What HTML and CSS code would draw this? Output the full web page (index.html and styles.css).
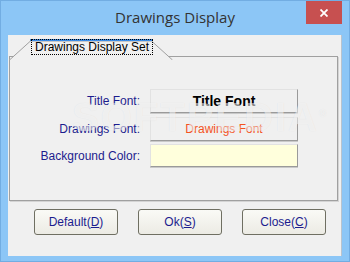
FILE: index.html
```html
<!DOCTYPE html>
<html lang="en">

<head>
  <meta charset="UTF-8">
  <title>Drawings Display</title>
  <link rel="stylesheet" href="styles.css">
</head>

<body>
  <div class="window">
    <!-- title bar -->
    <div class="titlebar">
      <span></span>
      <span class="title">Drawings Display</span>
      <button class="close" aria-label="Close">
        <svg width="8" height="8" viewBox="0 0 8 8">
          <path d="M0.5 0.5 L7.5 7.5 M7.5 0.5 L0.5 7.5" stroke="#fff" stroke-width="1.8" />
        </svg>
      </button>
    </div>

    <div class="client">
      <!-- tab control -->
      <div class="tab-strip">
        <div class="tab">
          <svg class="tab-shape" width="164" height="21" viewBox="0 0 164 21">
            <polyline points="0.5,21 21.5,2 142.5,2 163.5,21" fill="#f0f0f0" stroke="#a0a0a0" stroke-width="1" />
            <rect x="21" y="0" width="122" height="2" fill="#3b8be6" />
          </svg>
          <span class="tab-label">Drawings Display Set</span>
        </div>
      </div>

      <div class="tab-page">
        <div class="form-grid">
          <label class="field-label">Title Font:</label>
          <button class="field-btn title-font">Title Font</button>

          <label class="field-label">Drawings Font:</label>
          <button class="field-btn drawings-font">Drawings Font</button>

          <label class="field-label">Background Color:</label>
          <div class="color-box"></div>
        </div>
        <div class="watermark">SOFTPEDIA<sup>®</sup></div>
      </div>

      <!-- dialog buttons -->
      <div class="actions">
        <button class="dlg-btn">Default(<u>D</u>)</button>
        <button class="dlg-btn">Ok(<u>S</u>)</button>
        <button class="dlg-btn">Close(<u>C</u>)</button>
      </div>
    </div>
  </div>
</body>

</html>
```

FILE: styles.css
```css
/* global */
html,
body {
  margin: 0;
  padding: 0;
  width: 350px;
  height: 262px;
  overflow: hidden;
}

body {
  font-family: "Liberation Sans", Arial, sans-serif;
  font-size: 12px;
}

/* window frame */
.window {
  width: 350px;
  height: 262px;
  box-sizing: border-box;
  background-color: #8cc6f6;
  border: 1px solid #72ade2;
  padding: 0 7px 5px 7px;
  display: flex;
  flex-direction: column;
}

.titlebar {
  height: 34px;
  display: grid;
  grid-template-columns: 1fr auto 1fr;
  align-items: start;
}

.title {
  padding-top: 6px;
  font-family: "Open Sans", "Noto Sans", sans-serif;
  font-size: 15px;
  line-height: 20px;
  color: #333;
  white-space: nowrap;
}

.close {
  justify-self: end;
  width: 36px;
  height: 23px;
  border: 0;
  padding: 0;
  background-color: #c75050;
  display: flex;
  align-items: center;
  justify-content: center;
}

.close svg {
  display: block;
}

/* client area */
.client {
  flex: 1;
  background-color: #f0f0f0;
  padding: 1px 4px 0 1px;
  display: flex;
  flex-direction: column;
  box-shadow: inset -1px 0 0 #b9c3cd;
}

/* tab */
.tab-strip {
  height: 21px;
  margin-bottom: -1px;
  position: relative;
  z-index: 1;
}

.tab {
  position: relative;
  width: 164px;
  height: 21px;
}

.tab-shape {
  position: absolute;
  left: 0;
  top: 0;
}

.tab-label {
  position: relative;
  display: block;
  box-sizing: border-box;
  margin: 3px 0 0 22px;
  width: 122px;
  height: 16px;
  border: 1px dotted #000;
  line-height: 14px;
  text-align: center;
  color: #000;
  white-space: nowrap;
}

.tab-page {
  position: relative;
  height: 145px;
  box-sizing: border-box;
  border: 1px solid #a0a0a0;
  box-shadow: 1px 1px 0 #d4d4d4;
  padding-top: 32px;
}

.form-grid {
  display: grid;
  grid-template-columns: 130px 148px;
  grid-auto-rows: 24px;
  column-gap: 10px;
  row-gap: 3.5px;
}

.field-label {
  align-self: center;
  text-align: right;
  color: #1c1c8e;
  white-space: nowrap;
}

.field-btn,
.color-box {
  box-sizing: border-box;
  border-style: solid;
  border-width: 1px;
  border-color: #e2e2e2 #9a9a9a #9a9a9a #e2e2e2;
  box-shadow: 0 1px 0 #c9c9c9;
  background-color: #f0f0f0;
  padding: 0;
  font-family: "Liberation Sans", Arial, sans-serif;
}

.title-font {
  font-size: 14px;
  font-weight: bold;
  color: #000;
}

.drawings-font {
  font-size: 12px;
  color: #f4531f;
}

.color-box {
  height: 23px;
  background-color: #ffffdc;
}

/* watermark */
.watermark {
  position: absolute;
  left: 62px;
  top: 38px;
  font-family: "Liberation Sans", Arial, sans-serif;
  font-size: 40px;
  font-weight: bold;
  letter-spacing: 2px;
  color: rgba(255, 255, 255, 0.55);
  text-shadow: 0 0 1px rgba(0, 0, 0, 0.08);
  pointer-events: none;
}

.watermark sup {
  font-size: 10px;
}

/* dialog buttons */
.actions {
  display: flex;
  gap: 20px;
  margin-top: 8px;
  padding-left: 25px;
}

.dlg-btn {
  width: 84px;
  height: 26px;
  border: 1px solid #6f6f62;
  border-radius: 3px;
  background: linear-gradient(#fafaf6, #ecebe4);
  color: #1c1c8e;
  font-family: "Liberation Sans", Arial, sans-serif;
  font-size: 12px;
  padding: 0;
}
```
